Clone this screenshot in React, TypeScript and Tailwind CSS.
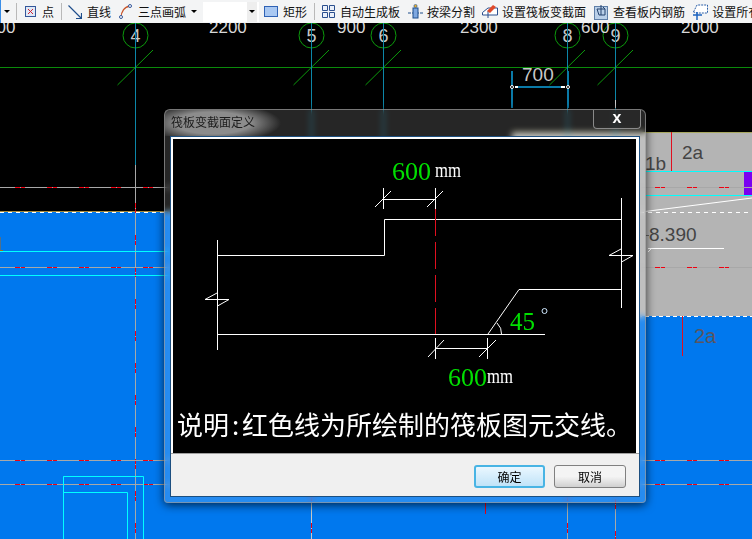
const serif = { fontFamily: '"Liberation Serif", serif' };

const dashXs = [15, 47, 79, 111, 143, 655, 687, 719];
const dashYs = [203, 235, 267, 299, 331, 363, 395, 427, 459, 491, 523];

const Caret = ({ className }: { className: string }) => (
  <span className={`w-0 h-0 border-x-[3px] border-x-transparent border-t-[3px] border-t-black shrink-0 ${className}`} />
);

const Sep = ({ className }: { className: string }) => (
  <span className={`w-px h-[17px] bg-[#b9b9b9] shrink-0 ${className}`} />
);

const Label = ({ text, className }: { text: string; className: string }) => (
  <span className={`text-[12px] leading-none text-[#111] whitespace-nowrap shrink-0 ${className}`}>{text}</span>
);

const Toolbar = () => (
  <div
    className="flex items-center h-[23px] bg-[#f3f4f5] overflow-hidden"
    style={{ fontFamily: '"Noto Sans CJK SC", sans-serif' }}
  >
    <span className="w-px h-full bg-[#3a8ee8] shrink-0" />
    <Caret className="ml-[3px]" />
    <Sep className="ml-[6px]" />
    <svg className="ml-[8px] shrink-0" width="11" height="11" viewBox="0 0 11 11">
      <rect x="0.5" y="0.5" width="10" height="10" fill="#dfe8f6" stroke="#34579a" />
      <path d="M3 3l5 5M8 3l-5 5" stroke="#d02030" fill="none" />
    </svg>
    <Label text="点" className="ml-[6px]" />
    <Sep className="ml-[7px]" />
    <svg className="ml-[6px] shrink-0" width="14" height="14" viewBox="0 0 14 14">
      <path d="M0.5 0.5L13 13M13.5 8v5.5H8" stroke="#1f4e8c" strokeWidth="1.2" fill="none" />
    </svg>
    <Label text="直线" className="ml-[5px]" />
    <svg className="ml-[8px] shrink-0" width="13" height="15" viewBox="0 0 13 15">
      <path d="M2 14C2 8 5 3 11 2" stroke="#c8552a" strokeWidth="1.3" fill="none" />
      <circle cx="2" cy="13" r="1.5" fill="#fff" stroke="#34579a" />
      <circle cx="11" cy="2" r="1.5" fill="#fff" stroke="#34579a" />
    </svg>
    <Label text="三点画弧" className="ml-[6px]" />
    <Caret className="ml-[5px]" />
    <span className="ml-[6px] w-[44px] h-[20px] bg-white shrink-0" />
    <span className="flex items-center justify-center w-[10px] h-[20px] bg-[#eeeeee] border-r-2 border-white box-content shrink-0">
      <Caret className="" />
    </span>
    <svg className="ml-[5px] shrink-0" width="14" height="11" viewBox="0 0 14 11">
      <rect x="0.5" y="0.5" width="13" height="10" fill="#a9c8f2" stroke="#2f62b5" />
    </svg>
    <Label text="矩形" className="ml-[5px]" />
    <Sep className="ml-[7px]" />
    <svg className="ml-[7px] shrink-0" width="13" height="13" viewBox="0 0 13 13">
      <path d="M.5.5h5v5h-5zM7.5.5h5v5h-5zM.5 7.5h5v5h-5zM7.5 7.5h5v5h-5z" fill="#eaf0fa" stroke="#2b4f8e" />
    </svg>
    <Label text="自动生成板" className="ml-[5px]" />
    <svg className="ml-[8px] shrink-0" width="15" height="15" viewBox="0 0 15 15">
      <path d="M0 9h15" stroke="#1f4e8c" strokeDasharray="3 1" />
      <rect x="5" y="4" width="5" height="10" fill="#7fa8e0" stroke="#1f4e8c" />
      <circle cx="7.5" cy="2" r="1.6" fill="#e8b030" stroke="#1f4e8c" strokeWidth="0.6" />
    </svg>
    <Label text="按梁分割" className="ml-[4px]" />
    <svg className="ml-[7px] shrink-0" width="16" height="15" viewBox="0 0 16 15">
      <path d="M.5 8.5L6 4h9.5v7H.5z" fill="#fff" stroke="#2b4f8e" />
      <path d="M6 14V7" stroke="#2b4f8e" />
      <path d="M5 7l6-6 3 2-6 6z" fill="#e04a2a" />
    </svg>
    <Label text="设置筏板变截面" className="ml-[4px]" />
    <svg className="ml-[8px] shrink-0" width="14" height="16" viewBox="0 0 14 16">
      <rect x="0.5" y="2.5" width="13" height="13" fill="#b9cfe8" stroke="#5f7fa8" />
      <path d="M3 5h8v6H5zM7 1v10M9 3l2 2" stroke="#24436f" fill="none" />
    </svg>
    <Label text="查看板内钢筋" className="ml-[5px]" />
    <svg className="ml-[8px] shrink-0" width="15" height="16" viewBox="0 0 15 16">
      <path d="M.5 8L4 1h10.5v8H4z" fill="#fff" stroke="#2b5fa8" strokeDasharray="2 1" />
      <path d="M0 11h9M4 8v8" stroke="#1c63c0" strokeWidth="1.5" />
    </svg>
    <Label text="设置所有" className="ml-[4px]" />
  </div>
);

const axes = [
  { x: 135.5, n: '4' },
  { x: 311.5, n: '5' },
  { x: 383.5, n: '6' },
  { x: 567.5, n: '8' },
  { x: 615.5, n: '9' },
];

const CadCanvas = () => (
  <svg className="block w-[752px] h-[516px]" viewBox="0 23 752 516" style={{ fontFamily: '"Liberation Sans", sans-serif' }}>
    <rect x="0" y="23" width="752" height="516" fill="#000" />
    <rect x="0" y="211" width="752" height="328" fill="#0078ee" />
    <rect x="512" y="132" width="240" height="184" fill="#b4b4b4" />
    <path d="M512 132.5H752" stroke="#a8a860" />
    <path d="M0 211.5H512" stroke="#a88c3c" />
    <path d="M0 212.5H752" stroke="#fff" strokeDasharray="4 4" />
    <path d="M512 316.5H752" stroke="#fff" strokeDasharray="4 3" />

    <path d="M0 67.5H752" stroke="#0a8a0a" />
    {axes.map((a) => (
      <g key={a.n}>
        <circle cx={a.x} cy={35.5} r={12.5} fill="none" stroke="#0c9a0c" />
        <path d={`M${a.x - 18} 85L${a.x + 17.5} 50`} stroke="#0c9a0c" />
        <text x={a.x} y={42} textAnchor="middle" fontSize="18" fill="#c8c8c8">{a.n}</text>
        <path d={`M${a.x} 23V165`} stroke="#0c86a8" />
      </g>
    ))}
    <path d="M615.5 100V108" stroke="#ccc" />

    <g fontSize="17" fill="#d8d8d8">
      <text x="-13" y="33">900</text>
      <text x="209" y="33">2200</text>
      <text x="337" y="33">900</text>
      <text x="460" y="33">2300</text>
      <text x="581" y="33">600</text>
      <text x="681" y="33">2000</text>
    </g>

    <path d="M512 71V108M568 71V108" stroke="#0a7aa8" strokeWidth="2" />
    <path d="M515 87H565" stroke="#0a7aa8" strokeWidth="2" />
    <path d="M515 87H518M561 87H565" stroke="#fff" strokeWidth="2" />
    <circle cx="512" cy="87" r="1.5" fill="#000" stroke="#fff" />
    <circle cx="568" cy="87" r="1.5" fill="#000" stroke="#fff" />
    <text x="522" y="81" fontSize="19" fill="#c8c8c8">700</text>

    <path d="M135.5 165V539M567.5 503V539M615.5 503V539" stroke="#a8a8a8" />
    <path d="M311.5 503V539" stroke="#c8c8c8" />
    {dashYs.map((y) => (
      <path
        key={y}
        d={`M135.5 ${y}v5m0 1v4M567.5 ${y}v5m0 1v4M311.5 ${y}v5m0 1v4M615.5 ${y + 8}v5m0 1v4`}
        stroke="#f00010"
      />
    ))}
    <path d="M485.5 503V514" stroke="#f00010" />

    <path d="M0 187.5H752M0 267.5H752M0 460.5H752M0 484.5H752" stroke="#a8a8a8" />
    {[187.5, 267.5, 460.5, 484.5].map((y) =>
      dashXs.map((x) => (
        <path key={`${x}-${y}`} d={`M${x} ${y}H${x + 5}M${x + 6} ${y}H${x + 10}`} stroke="#f00010" />
      )),
    )}

    <path d="M0 251.5H170M0 275.5H170M645 171.5H752M645 195.5H752" stroke="#00ffff" />
    <path d="M63.5 539V476.5H143.5V539M63.5 476.5V492.5H127.5V539" fill="none" stroke="#00ffff" />
    <rect x="744" y="172" width="8" height="23" fill="#7a00f0" />
    <path d="M744 187.5H752" stroke="#a8a8a8" />
    <rect x="0" y="237" width="1" height="13" fill="#50708a" />
    <rect x="0" y="250" width="3" height="1" fill="#a06a20" />

    <path d="M671.5 132V171M682.5 316V356" stroke="#e01020" />
    <g fontSize="19" fill="#444">
      <text x="645" y="170">1b</text>
      <text x="682" y="159">2a</text>
      <text x="649" y="241">8.390</text>
    </g>
    <path d="M646 235.5H649" stroke="#666" />
    <text x="694" y="343" fontSize="20" fill="#5a5560">2a</text>
    <path d="M645 211.5L752 198" stroke="#fff" />
    <path d="M648 248.5H724M648 252L652 248" stroke="#fff" />
  </svg>
);

const SectionDrawing = () => (
  <svg className="block w-[464px] h-[264px] shrink-0" viewBox="173 139 464 264">
    <g fill="none" stroke="#fff" strokeWidth="1">
      <path d="M621.5 219.5H384.5V255.5H217.5" />
      <path d="M217.5 240V350M217.5 334.5H545" />
      <path d="M621.5 198V308M621.5 289.5H519L488 334" />
      <path d="M205 299.5H229L217.5 306M205 299.5L217 293" />
      <path d="M609 255.5H633L621.5 262M609 255.5L621 249" />
      <path d="M383.5 188V209M435.5 188V209M383.5 199.5H435.5M375 207L391 191M427 207L443 191" />
      <path d="M435.5 338V359M487.5 338V359M435.5 348.5H487.5M428 357L444 340M479 357L496 340" />
      <path d="M497 323Q502 328 501.5 334" />
    </g>
    <path d="M435.5 209V334" stroke="#e01020" strokeDasharray="27 6" />
    <g style={serif}>
      <text x="392" y="180" fontSize="26" fill="#00e000">600</text>
      <text x="435" y="177" fontSize="20" fill="#fff" textLength="26" lengthAdjust="spacingAndGlyphs">mm</text>
      <text x="510" y="330" fontSize="25" fill="#00e000">45</text>
      <circle cx="544.5" cy="311" r="2.5" fill="none" stroke="#cfe8ff" />
      <text x="448" y="386" fontSize="26" fill="#00e000">600</text>
      <text x="487" y="383" fontSize="20" fill="#fff" textLength="26" lengthAdjust="spacingAndGlyphs">mm</text>
    </g>
  </svg>
);

const Dialog = () => (
  <div
    className="absolute left-[164px] top-[86px] w-[482px] h-[394px] flex flex-col rounded-t-[6px] rounded-b-[4px] border border-[#9a9a9a]/70 bg-[#ffffff26] backdrop-blur-[3px] shadow-[0_2px_10px_rgba(0,0,0,0.7)]"
    style={{ fontFamily: '"Noto Sans CJK SC", sans-serif' }}
  >
    <div className="flex h-[26px] shrink-0 items-start justify-between bg-[radial-gradient(ellipse_68px_20px_at_48px_13px,#8c8c8c_55%,transparent_100%)]">
      <span className="ml-[6px] mt-[5px] text-[12px] leading-[14px] text-[#1c1c1c] whitespace-nowrap">筏板变截面定义</span>
      <span className="mr-[4px] w-[48px] h-[19px] flex items-center justify-center pb-[3px] rounded-b-[4px] border border-t-0 border-[#8a8a8a] bg-[#2a2a2a]/60 text-white text-[16px] font-bold leading-none" style={{ fontFamily: '"Liberation Sans", sans-serif' }}>
        x
      </span>
    </div>
    <div className="mx-[5px] mb-[5px] flex-1 flex flex-col border border-[#1c4f80] bg-[#f0f0f0]">
      <div className="flex flex-col h-[316px] shrink-0 border-2 border-white border-b-0 border-r-[3px] bg-black">
        <SectionDrawing />
        <p className="pl-[4px] text-[26px] leading-[42px] text-white whitespace-nowrap">
          说明<span className="inline-block w-[13px] text-center">:</span>红色线为所绘制的筏板图元交线。
        </p>
      </div>
      <div className="flex-1 flex items-start justify-end gap-[9px] pt-[11px] pr-[13px] border-t border-[#a0a0a0]">
        <button className="w-[71px] h-[23px] rounded-[3px] border-2 border-[#48b4e4] bg-[linear-gradient(#eaf7ff,#c0e3f8)] text-[12px] text-black leading-none">确定</button>
        <button className="w-[72px] h-[23px] rounded-[3px] border border-[#808080] bg-[linear-gradient(#f4f4f4_50%,#d0d0d0)] text-[12px] text-black leading-none">取消</button>
      </div>
    </div>
  </div>
);

export default function App() {
  return (
    <div className="w-[752px] h-[539px] overflow-hidden flex flex-col bg-black">
      <Toolbar />
      <div className="relative flex-1">
        <CadCanvas />
        <Dialog />
      </div>
    </div>
  );
}
